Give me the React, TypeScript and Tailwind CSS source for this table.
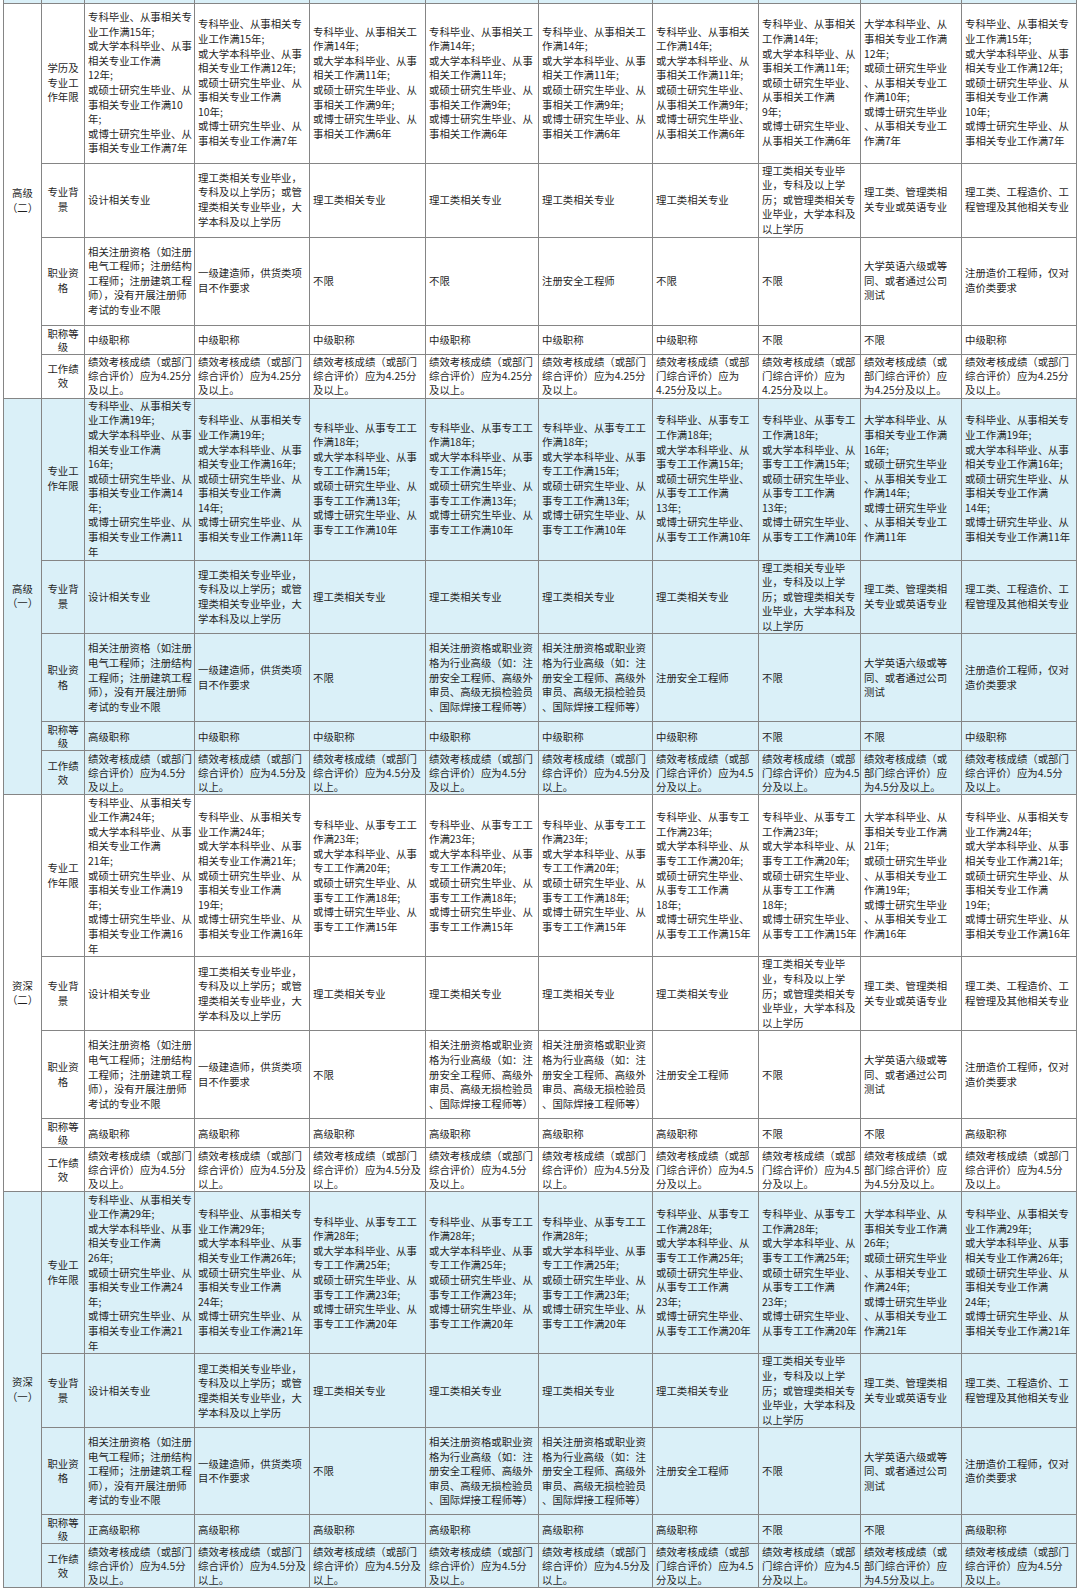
import React from "react";

type Row = { label: string[]; h: string; lead?: string; cells: string[][] };
type Group = { level: string[]; bg: string; rows: Row[] };

const C3 = (a: string, b: string, c: string, d: string): string[] => [
  "专科毕业、从事相关专",
  `业工作满${a}年;`,
  "或大学本科毕业、从事",
  "相关专业工作满",
  `${b}年;`,
  "或硕士研究生毕业、从",
  `事相关专业工作满${c}`,
  "年;",
  "或博士研究生毕业、从",
  ...(d.length === 1 ? [`事相关专业工作满${d}年`] : [`事相关专业工作满${d}`, "年"]),
];

const C4 = (a: string, b: string, c: string, d: string): string[] => [
  "专科毕业、从事相关专",
  `业工作满${a}年;`,
  "或大学本科毕业、从事",
  `相关专业工作满${b}年;`,
  "或硕士研究生毕业、从",
  "事相关专业工作满",
  `${c}年;`,
  "或博士研究生毕业、从",
  `事相关专业工作满${d}年`,
];

const C5 = (k: string, a: string, b: string, c: string, d: string): string[] => [
  `专科毕业、从事${k}工`,
  `作满${a}年;`,
  "或大学本科毕业、从事",
  `${k}工作满${b}年;`,
  "或硕士研究生毕业、从",
  `事${k}工作满${c}年;`,
  "或博士研究生毕业、从",
  `事${k}工作满${d}年`,
];

const C8 = (k: string, a: string, b: string, c: string, d: string): string[] => [
  `专科毕业、从事${k}`,
  `工作满${a}年;`,
  "或大学本科毕业、从",
  `事${k}工作满${b}年;`,
  "或硕士研究生毕业、",
  `从事${k}工作满${c}年;`,
  "或博士研究生毕业、",
  `从事${k}工作满${d}年`,
];

const C9 = (k: string, a: string, b: string, c: string, d: string): string[] => [
  `专科毕业、从事${k}`,
  `工作满${a}年;`,
  "或大学本科毕业、从",
  `事${k}工作满${b}年;`,
  "或硕士研究生毕业、",
  `从事${k}工作满`,
  `${c}年;`,
  "或博士研究生毕业、",
  `从事${k}工作满${d}年`,
];

const C10 = (b: string, c: string, d: string): string[] => [
  "大学本科毕业、从",
  "事相关专业工作满",
  `${b}年;`,
  "或硕士研究生毕业",
  "、从事相关专业工",
  `作满${c}年;`,
  "或博士研究生毕业",
  "、从事相关专业工",
  `作满${d}年`,
];

const BG: string[][] = [
  ["设计相关专业"],
  ["理工类相关专业毕业，", "专科及以上学历；或管", "理类相关专业毕业，大", "学本科及以上学历"],
  ["理工类相关专业"],
  ["理工类相关专业"],
  ["理工类相关专业"],
  ["理工类相关专业"],
  ["理工类相关专业毕", "业，专科及以上学", "历；或管理类相关专", "业毕业，大学本科及", "以上学历"],
  ["理工类、管理类相", "关专业或英语专业"],
  ["理工类、工程造价、工", "程管理及其他相关专业"],
];

const ZC = ["相关注册资格（如注册", "电气工程师；注册结构", "工程师；注册建筑工程", "师），没有开展注册师", "考试的专业不限"];
const JZ = ["一级建造师，供货类项", "目不作要求"];
const HY = ["相关注册资格或职业资", "格为行业高级（如：注", "册安全工程师、高级外", "审员、高级无损检验员", "、国际焊接工程师等）"];
const EN = ["大学英语六级或等", "同、或者通过公司", "测试"];
const ZJ = ["注册造价工程师，仅对", "造价类要求"];

const QUAL1: string[][] = [ZC, JZ, ["不限"], ["不限"], ["注册安全工程师"], ["不限"], ["不限"], EN, ZJ];
const QUAL2: string[][] = [ZC, JZ, ["不限"], HY, HY, ["注册安全工程师"], ["不限"], EN, ZJ];

const PERF1: string[][] = [
  ["绩效考核成绩（或部门", "综合评价）应为4.25分", "及以上。"],
  ["绩效考核成绩（或部门", "综合评价）应为4.25分", "及以上。"],
  ["绩效考核成绩（或部门", "综合评价）应为4.25分", "及以上。"],
  ["绩效考核成绩（或部门", "综合评价）应为4.25分", "及以上。"],
  ["绩效考核成绩（或部门", "综合评价）应为4.25分", "及以上。"],
  ["绩效考核成绩（或部", "门综合评价）应为", "4.25分及以上。"],
  ["绩效考核成绩（或部", "门综合评价）应为", "4.25分及以上。"],
  ["绩效考核成绩（或", "部门综合评价）应", "为4.25分及以上。"],
  ["绩效考核成绩（或部门", "综合评价）应为4.25分", "及以上。"],
];

const PERF2: string[][] = [
  ["绩效考核成绩（或部门", "综合评价）应为4.5分", "及以上。"],
  ["绩效考核成绩（或部门", "综合评价）应为4.5分及", "以上。"],
  ["绩效考核成绩（或部门", "综合评价）应为4.5分及", "以上。"],
  ["绩效考核成绩（或部门", "综合评价）应为4.5分", "及以上。"],
  ["绩效考核成绩（或部门", "综合评价）应为4.5分及", "以上。"],
  ["绩效考核成绩（或部", "门综合评价）应为4.5", "分及以上。"],
  ["绩效考核成绩（或部", "门综合评价）应为4.5", "分及以上。"],
  ["绩效考核成绩（或", "部门综合评价）应", "为4.5分及以上。"],
  ["绩效考核成绩（或部门", "综合评价）应为4.5分", "及以上。"],
];

const title = (first: string, rest: string, last: string): string[][] => [
  [first], [rest], [rest], [rest], [rest], [rest], [last], [last], [rest],
];

const BLUE = "bg-[#daf0f8]";
const WHITE = "bg-white";
const TIGHT = "leading-[13px]";
const PERF_LEAD = "leading-[14.2px]";

const groups: Group[] = [
  {
    level: ["高级", "（二）"],
    bg: WHITE,
    rows: [
      {
        label: ["学历及", "专业工", "作年限"],
        h: "h-[160px]",
        cells: [
          C3("15", "12", "10", "7"),
          C4("15", "12", "10", "7"),
          C5("相关", "14", "11", "9", "6"),
          C5("相关", "14", "11", "9", "6"),
          C5("相关", "14", "11", "9", "6"),
          C8("相关", "14", "11", "9", "6"),
          C9("相关", "14", "11", "9", "6"),
          C10("12", "10", "7"),
          C4("15", "12", "10", "7"),
        ],
      },
      { label: ["专业背", "景"], h: "h-[74px]", cells: BG },
      { label: ["职业资", "格"], h: "h-[88px]", cells: QUAL1 },
      { label: ["职称等", "级"], h: "h-[29px]", lead: TIGHT, cells: title("中级职称", "中级职称", "不限") },
      { label: ["工作绩", "效"], h: "h-[44px]", lead: PERF_LEAD, cells: PERF1 },
    ],
  },
  {
    level: ["高级", "（一）"],
    bg: BLUE,
    rows: [
      {
        label: ["专业工", "作年限"],
        h: "h-[162px]",
        cells: [
          C3("19", "16", "14", "11"),
          C4("19", "16", "14", "11"),
          C5("专工", "18", "15", "13", "10"),
          C5("专工", "18", "15", "13", "10"),
          C5("专工", "18", "15", "13", "10"),
          C9("专工", "18", "15", "13", "10"),
          C9("专工", "18", "15", "13", "10"),
          C10("16", "14", "11"),
          C4("19", "16", "14", "11"),
        ],
      },
      { label: ["专业背", "景"], h: "h-[73px]", cells: BG },
      { label: ["职业资", "格"], h: "h-[88px]", cells: QUAL2 },
      { label: ["职称等", "级"], h: "h-[29px]", lead: TIGHT, cells: [["高级职称"], ["中级职称"], ["中级职称"], ["中级职称"], ["中级职称"], ["中级职称"], ["不限"], ["不限"], ["中级职称"]] },
      { label: ["工作绩", "效"], h: "h-[44px]", lead: PERF_LEAD, cells: PERF2 },
    ],
  },
  {
    level: ["资深", "（二）"],
    bg: WHITE,
    rows: [
      {
        label: ["专业工", "作年限"],
        h: "h-[162px]",
        cells: [
          C3("24", "21", "19", "16"),
          C4("24", "21", "19", "16"),
          C5("专工", "23", "20", "18", "15"),
          C5("专工", "23", "20", "18", "15"),
          C5("专工", "23", "20", "18", "15"),
          C9("专工", "23", "20", "18", "15"),
          C9("专工", "23", "20", "18", "15"),
          C10("21", "19", "16"),
          C4("24", "21", "19", "16"),
        ],
      },
      { label: ["专业背", "景"], h: "h-[72px]", cells: BG },
      { label: ["职业资", "格"], h: "h-[88px]", cells: QUAL2 },
      { label: ["职称等", "级"], h: "h-[29px]", lead: TIGHT, cells: title("高级职称", "高级职称", "不限") },
      { label: ["工作绩", "效"], h: "h-[44px]", lead: PERF_LEAD, cells: PERF2 },
    ],
  },
  {
    level: ["资深", "（一）"],
    bg: BLUE,
    rows: [
      {
        label: ["专业工", "作年限"],
        h: "h-[162px]",
        cells: [
          C3("29", "26", "24", "21"),
          C4("29", "26", "24", "21"),
          C5("专工", "28", "25", "23", "20"),
          C5("专工", "28", "25", "23", "20"),
          C5("专工", "28", "25", "23", "20"),
          C9("专工", "28", "25", "23", "20"),
          C9("专工", "28", "25", "23", "20"),
          C10("26", "24", "21"),
          C4("29", "26", "24", "21"),
        ],
      },
      { label: ["专业背", "景"], h: "h-[73px]", cells: BG },
      { label: ["职业资", "格"], h: "h-[87px]", cells: QUAL2 },
      { label: ["职称等", "级"], h: "h-[29px]", lead: TIGHT, cells: title("正高级职称", "高级职称", "不限") },
      { label: ["工作绩", "效"], h: "h-[44px]", lead: PERF_LEAD, cells: PERF2 },
    ],
  },
];

const cellCls = "border border-[#858585] px-[3px] py-0 align-middle text-left";
const centerCls = "border border-[#858585] px-0 py-0 align-middle text-center";

function Lines({ lines, lead }: { lines: string[]; lead?: string }) {
  return (
    <div className={lead ?? ""}>
      {lines.map((l, i) => (
        <div key={i} className="whitespace-nowrap">
          {l}
        </div>
      ))}
    </div>
  );
}

export default function App() {
  return (
    <div className="w-[1080px] min-h-[1591px] bg-white pl-[3px] font-['Noto_Sans_CJK_SC','Noto_Sans_CJK_JP',sans-serif] text-[#1f1f1f]">
      <table className="w-[1073px] table-fixed border-collapse text-[10.4px] leading-[14.6px]">
        <colgroup>
          <col className="w-[38px]" />
          <col className="w-[43px]" />
          <col className="w-[110px]" />
          <col className="w-[115px]" />
          <col className="w-[116px]" />
          <col className="w-[113px]" />
          <col className="w-[114px]" />
          <col className="w-[106px]" />
          <col className="w-[102px]" />
          <col className="w-[101px]" />
          <col className="w-[115px]" />
        </colgroup>
        <tbody>
          <tr className="h-[3px] bg-[#daf0f8]">
            {Array.from({ length: 11 }).map((_, i) => (
              <td key={i} className="border-x border-b border-[#858585] p-0 leading-none" />
            ))}
          </tr>
          {groups.map((g, gi) =>
            g.rows.map((r, ri) => (
              <tr key={`${gi}-${ri}`} className={`${r.h} ${g.bg}`}>
                {ri === 0 && (
                  <td rowSpan={5} className={centerCls}>
                    <Lines lines={g.level} />
                  </td>
                )}
                <td className={centerCls}>
                  <Lines lines={r.label} lead={r.lead} />
                </td>
                {r.cells.map((c, ci) => (
                  <td key={ci} className={cellCls}>
                    <Lines lines={c} lead={r.lead} />
                  </td>
                ))}
              </tr>
            ))
          )}
        </tbody>
      </table>
    </div>
  );
}
